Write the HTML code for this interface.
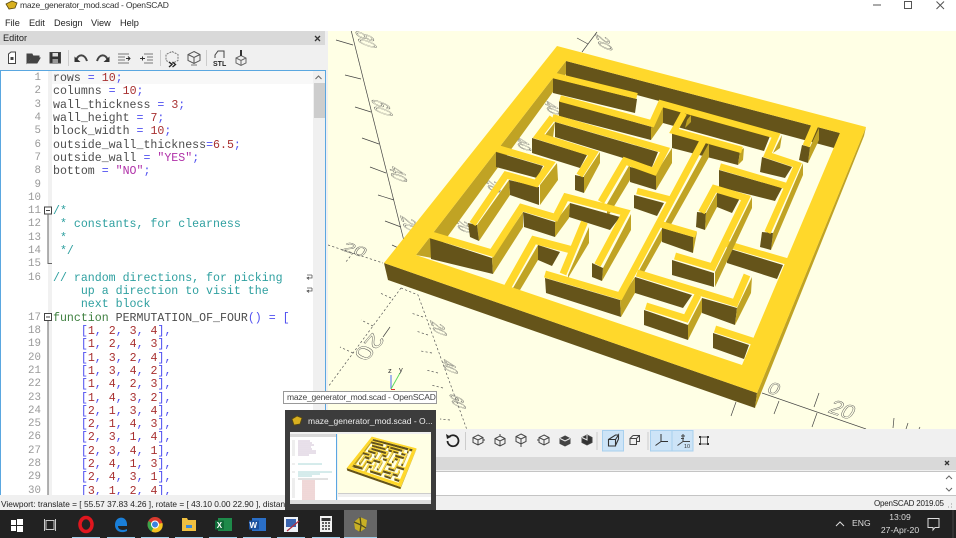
<!DOCTYPE html>
<html lang="en"><head><meta charset="utf-8"><title>maze_generator_mod.scad - OpenSCAD</title>
<style>
html,body{margin:0;padding:0;width:956px;height:538px;overflow:hidden;background:#f0f0f0}
body{position:relative;font-family:"Liberation Sans",sans-serif;color:#222}
.a{position:absolute}
.ui{font-size:9.2px;white-space:nowrap;filter:blur(.25px)}
pre{margin:0;font-family:"Liberation Mono",monospace;font-size:11.6px;line-height:13.32px;filter:blur(.35px)}
.k{color:#5050f0}.n{color:#a83030}.s{color:#b030a8}.c{color:#2fa0a0}.f{color:#3f8040}.i{color:#4c4c4c}
.d{fill:#65541a}.l{fill:#c0a324}
.t{fill:none;stroke:#ffd82b;stroke-width:7;stroke-linejoin:miter;stroke-miterlimit:6}
.ax{stroke:#444;stroke-width:.7;fill:none}
.da{stroke:#555;stroke-width:.7;fill:none;stroke-dasharray:2.2 2.2}
.lb{font-family:"Liberation Sans",sans-serif;font-size:10px;fill:none;stroke:#555;stroke-width:.45px;vector-effect:non-scaling-stroke}
</style></head><body>

<!-- title + menu -->
<div class="a" style="left:0;top:0;width:956px;height:31px;background:#fff"></div>
<div class="a ui" style="left:20px;top:0;font-size:8.5px;letter-spacing:-.2px;line-height:11px;color:#333">maze_generator_mod.scad - OpenSCAD</div>
<div class="a ui" style="left:5px;top:18px;line-height:11px;color:#222">File</div>
<div class="a ui" style="left:29px;top:18px;line-height:11px;color:#222">Edit</div>
<div class="a ui" style="left:54px;top:18px;line-height:11px;color:#222">Design</div>
<div class="a ui" style="left:91px;top:18px;line-height:11px;color:#222">View</div>
<div class="a ui" style="left:120px;top:18px;line-height:11px;color:#222">Help</div>

<!-- editor -->
<div class="a" style="left:0;top:31px;width:325px;height:14px;background:#d9d9d9"></div>
<div class="a ui" style="left:3px;top:33px;line-height:11px;color:#222">Editor</div>
<div class="a" style="left:0;top:70px;width:326px;height:425px;box-sizing:border-box;border:1px solid #5aa7e0;border-bottom:0;background:#fff"></div>
<div class="a" style="left:48px;top:71px;width:4px;height:424px;background:#f1f1f1"></div>
<div class="a" style="left:52px;top:71px;width:261px;height:13px;background:#f8f8f8"></div>
<div class="a" style="left:313px;top:71px;width:12px;height:424px;background:#f0f0f0"></div>
<div class="a" style="left:314px;top:83px;width:11px;height:35px;background:#cdcdcd"></div>

<pre class="a" style="left:0;top:72px;width:41px;height:423px;overflow:hidden;text-align:right;color:#999;font-size:10.8px">1
2
3
4
5
6
7
8
9
10
11
12
13
14
15
16


17
18
19
20
21
22
23
24
25
26
27
28
29
30</pre>
<pre class="a i" style="left:53px;top:72px;height:423px;overflow:hidden">rows <span class="k">=</span> <span class="n">10</span><span class="k">;</span>
columns <span class="k">=</span> <span class="n">10</span><span class="k">;</span>
wall_thickness <span class="k">=</span> <span class="n">3</span><span class="k">;</span>
wall_height <span class="k">=</span> <span class="n">7</span><span class="k">;</span>
block_width <span class="k">=</span> <span class="n">10</span><span class="k">;</span>
outside_wall_thickness<span class="k">=</span><span class="n">6.5</span><span class="k">;</span>
outside_wall <span class="k">=</span> <span class="s">"YES"</span><span class="k">;</span>
bottom <span class="k">=</span> <span class="s">"NO"</span><span class="k">;</span>


<span class="c">/*
 * constants, for clearness
 *
 */</span>

<span class="c">// random directions, for picking
    up a direction to visit the
    next block</span>
<span class="f">function</span> PERMUTATION_OF_FOUR<span class="k">()</span> <span class="k">=</span> <span class="k">[</span>
    <span class="k">[</span><span class="n">1</span><span class="k">,</span> <span class="n">2</span><span class="k">,</span> <span class="n">3</span><span class="k">,</span> <span class="n">4</span><span class="k">],</span>
    <span class="k">[</span><span class="n">1</span><span class="k">,</span> <span class="n">2</span><span class="k">,</span> <span class="n">4</span><span class="k">,</span> <span class="n">3</span><span class="k">],</span>
    <span class="k">[</span><span class="n">1</span><span class="k">,</span> <span class="n">3</span><span class="k">,</span> <span class="n">2</span><span class="k">,</span> <span class="n">4</span><span class="k">],</span>
    <span class="k">[</span><span class="n">1</span><span class="k">,</span> <span class="n">3</span><span class="k">,</span> <span class="n">4</span><span class="k">,</span> <span class="n">2</span><span class="k">],</span>
    <span class="k">[</span><span class="n">1</span><span class="k">,</span> <span class="n">4</span><span class="k">,</span> <span class="n">2</span><span class="k">,</span> <span class="n">3</span><span class="k">],</span>
    <span class="k">[</span><span class="n">1</span><span class="k">,</span> <span class="n">4</span><span class="k">,</span> <span class="n">3</span><span class="k">,</span> <span class="n">2</span><span class="k">],</span>
    <span class="k">[</span><span class="n">2</span><span class="k">,</span> <span class="n">1</span><span class="k">,</span> <span class="n">3</span><span class="k">,</span> <span class="n">4</span><span class="k">],</span>
    <span class="k">[</span><span class="n">2</span><span class="k">,</span> <span class="n">1</span><span class="k">,</span> <span class="n">4</span><span class="k">,</span> <span class="n">3</span><span class="k">],</span>
    <span class="k">[</span><span class="n">2</span><span class="k">,</span> <span class="n">3</span><span class="k">,</span> <span class="n">1</span><span class="k">,</span> <span class="n">4</span><span class="k">],</span>
    <span class="k">[</span><span class="n">2</span><span class="k">,</span> <span class="n">3</span><span class="k">,</span> <span class="n">4</span><span class="k">,</span> <span class="n">1</span><span class="k">],</span>
    <span class="k">[</span><span class="n">2</span><span class="k">,</span> <span class="n">4</span><span class="k">,</span> <span class="n">1</span><span class="k">,</span> <span class="n">3</span><span class="k">],</span>
    <span class="k">[</span><span class="n">2</span><span class="k">,</span> <span class="n">4</span><span class="k">,</span> <span class="n">3</span><span class="k">,</span> <span class="n">1</span><span class="k">],</span>
    <span class="k">[</span><span class="n">3</span><span class="k">,</span> <span class="n">1</span><span class="k">,</span> <span class="n">2</span><span class="k">,</span> <span class="n">4</span><span class="k">],</span></pre>

<!-- viewport -->
<div class="a" style="left:328px;top:31px;width:628px;height:398px;background:#ffffe5"></div>
<svg class="a" style="left:328px;top:31px" width="628" height="398" viewBox="328 31 628 398">
<defs>
<g id="maze">
<polygon class="d" points="566,61 840,133 834,148 566,76"/>
<polygon class="l" points="566,61 416,255 432,258 566,74"/>
<polygon class="l" points="819,128 810,147 808,163 819,140"/>
<polygon class="d" points="802,145 810,147 808,163 799,160"/>
<polyline class="t" points="815,125 806,146"/>

<polygon class="d" points="553,78 637,99 635,113 553,93"/>
<polyline class="t" style="stroke-width:6" points="552,75 637,96"/>

<polygon class="d" points="559,101 652,127 651,140 559,116"/>
<polygon class="d" points="663,107 770,136 764,151 663,123"/>
<polygon class="l" points="663,107 651,128 651,140 663,123"/>
<polygon class="l" points="782,135 780,148 773,153"/>
<polygon class="d" points="762,157 792,167 785,178 760,172"/>
<polygon class="l" points="803,163 773,233 771,250 803,175"/>
<polygon class="d" points="762,232 773,233 771,250 760,247"/>
<polyline class="t" style="stroke-width:6.5" points="560,98.5 652,123.5 661,103.5 776,135.5 767.5,155 797.5,165 767.5,232.5"/>

<polygon class="l" points="691,115 691,122 685,128 687,120"/>
<polygon class="d" points="672,133 740,151 738,165 672,148"/>
<polygon class="l" points="744,148 743,160 738,165 740,151"/>
<polyline class="t" style="stroke-width:6.5" points="684,113 674,131 742,150"/>

<polygon class="d" points="555,122 658,152 652,167 555,137"/>
<polygon class="l" points="555,122 545,135 553,138"/>
<polygon class="l" points="672,148 656,173 656,190 672,163"/>
<polygon class="d" points="630,167 656,173 656,190 630,182"/>
<polygon class="l" points="630,164 607,204 607,218 630,180"/>
<polyline class="t" points="552.5,117.5 665,150 654,171.5 625,161 601,202"/>
<polygon class="d" points="532,138 587,155 580,168 532,153"/>
<polygon class="l" points="600,152 600,163 584,193 584,176"/>
<polygon class="d" points="575,175 584,177 584,193 575,190"/>
<polyline class="t" points="552.5,117.5 538.5,136 593.5,153.5 579.5,175.5"/>

<polygon class="d" points="496,152 543,166 537,178 496,167"/>
<polygon class="l" points="557,163 540,185 540,205 558,180"/>
<polygon class="d" points="509,180 539,187 539,205 510,195"/>
<polygon class="l" points="509,180 477,225 479,241 510,195"/>
<polygon class="d" points="468,223 477,225 479,241 470,237"/>
<polyline class="t" points="496,148 550,164 536,183.5 506,175 472.5,224"/>

<polygon class="d" points="719,170 782,188 775,201 719,187"/>
<polyline class="t" style="stroke-width:6.5" points="720,166.5 786,186"/>

<polygon class="d" points="634,195 664,203 657,216 634,208"/>
<polyline class="t" style="stroke-width:6.5" points="637,191 672,200"/>

<polygon class="d" points="430,238 492,258 493,274 431,259"/>
<polygon class="l" points="492,258 523,212 523,227 493,274"/>
<polygon class="d" points="523,212 555,222 555,237 524,227"/>
<polygon class="l" points="555,222 570,203 569,218 555,237"/>
<polygon class="d" points="570,203 620,217 610,230 569,217"/>
<polygon class="l" points="631,214 603,268 602,281 631,230"/>
<polygon class="d" points="592,263 603,268 602,281 592,277"/>
<polyline class="t" points="428,234 492,253 521.5,207.5 555.5,217.5 566,197 625.5,212.5 597.5,265"/>

<polygon class="l" points="709,143 709,157 642,276 636,276"/>
<polygon class="d" points="545,278 620,300 621,317 546,293"/>
<polygon class="l" points="635,277 620,300 621,317 635,293"/>
<polyline class="t" points="703,141 634,270 620,296 545,274"/>

<polygon class="l" points="589,227 589,243 568,278 568,275"/>
<polyline class="t" points="584.5,222 563,274"/>

<polygon class="d" points="717,193 740,198 732,213 717,207"/>
<polygon class="d" points="697,212 706,213 705,230 696,227"/>
<polygon class="l" points="706,213 717,193 717,207 705,230"/>
<polygon class="d" points="727,248 783,265 777,279 727,263"/>
<polyline class="t" style="stroke-width:6.5" points="727,244 789,262"/>
<polygon class="l" points="752,197 752,208 715,287 715,272"/>
<polygon class="d" points="672,260 714,273 714,287 672,275"/>
<polyline class="t" points="701.5,212.5 714.5,188.5 746,198 712.5,267 675,256"/>

<polygon class="d" points="662,228 693,237 693,253 662,242"/>
<polygon class="l" points="697,232 693,253 693,237"/>
<polyline class="t" style="stroke-width:6.5" points="660,224 696,234.5"/>

<polygon class="d" points="635,277 692,295 683,308 635,293"/>
<polygon class="d" points="702,298 737,308 735,325 702,313"/>
<polygon class="l" points="752,277 737,308 735,325 751,293"/>
<polyline class="t" points="637,273 735,303 747,275"/>

<polygon class="d" points="644,310 688,325 688,340 644,325"/>
<polygon class="l" points="702,298 688,325 688,340 702,312"/>
<polyline class="t" points="646,306 686,318.5 698,295"/>

<polygon class="d" points="713,333 749,345 744,359 713,348"/>
<polyline class="t" points="715,329 755,342"/>

<polygon class="d" points="538,245 560,252 552,266 538,260"/>
<polygon class="l" points="538,245 513,288 520,290 538,260"/>
<polyline class="t" style="stroke-width:7.5" points="507,288 534,240 572,250"/>

<polygon class="d" points="384,263 757,393 755,408 388,280"/>
<polygon class="l" points="866,127 864,136 755,408 757,393"/>
<path fill="#ffd82b" fill-rule="evenodd" d="M557,46 866,127 757,393 384,263Z M566,61 416,255 742,365 840,133Z"/>
</g>
</defs>

<!-- axes -->
<g class="ax">
<path d="M351,30 408,257"/>
<path d="M353,45 336,40M361,79 345,75M371,112 355,107M379,144 362,138M386,173 370,167M394,200 378,195M401,227 385,221M407,252 392,245"/>
<path d="M582,52 597,32M577,38 588,44"/>
<path d="M762,393 866,429"/>
<path d="M736,402 731,416M779,401 774,414M819,393 814,407M817,413 812,427M894,418 893,428M908,423 906,429M920,427 919,429"/>
<path d="M390,327 383,337"/>
</g>
<g class="da">
<path d="M328,245 383,263"/>
<path d="M353,253 345,263"/>
<path d="M401,288 328,387"/>
<path d="M401,288 418,295 467,430"/>
<path d="M391,298 380,293M373,326 361,320M353,353 340,347"/>
<path d="M423,317 411,313M428,335 416,331M432,353 421,351M438,373 426,370M443,388 431,385M450,420 440,419"/>
</g>
<text class="lb" transform="matrix(.45,1.26,-2.5,-.83,355,30)">80</text>
<text class="lb" transform="matrix(.45,1.26,-2.5,-.83,371,98)">60</text>
<text class="lb" transform="matrix(.3,1.2,-2.2,-.75,389,165)">40</text>
<text class="lb" transform="matrix(.45,1.26,-2.2,-.75,400,215)">20</text>
<text class="lb" transform="matrix(.45,1.26,-1.9,-.7,595,33)">20</text>
<text class="lb" transform="matrix(.4,1.1,-1.8,-.6,544,100)">40</text>
<text class="lb" transform="matrix(.4,1.1,-1.8,-.6,515,136)">40</text>
<text class="lb" transform="matrix(.4,1.1,-1.8,-.6,485,178)">20</text>
<text class="lb" transform="matrix(.4,1.1,-1.8,-.6,455,218)">20</text>
<text class="lb" transform="matrix(2,.65,-.8,1.2,341,250)">20</text>
<text class="lb" transform="matrix(1.9,.65,-.85,1.5,766,392)">0</text>
<text class="lb" transform="matrix(2.1,.7,-1.1,1.8,827,412)">20</text>
<text class="lb" transform="matrix(-1.8,2.1,-1.9,-1,373,332)">20</text>
<text class="lb" transform="matrix(.4,1.1,-1.9,-.7,430,320)">20</text>
<text class="lb" transform="matrix(.4,1.1,-1.9,-.7,441,358)">40</text>
<text class="lb" transform="matrix(.4,1.1,-1.9,-.7,449,393)">60</text>

<use href="#maze"/>

<!-- axes gizmo -->
<path d="M391,375V389" stroke="#4a6cf0" stroke-width="1"/>
<path d="M391,389 400,373" stroke="#5fd85f" stroke-width="1"/>
<path d="M391,389.5h4" stroke="#e03030" stroke-width="1"/>
<text x="388" y="373" font-size="7.5" font-family="Liberation Sans" fill="#333">z</text>
<text x="399" y="372" font-size="7.5" font-family="Liberation Sans" fill="#333">y</text>
</svg>

<!-- viewport toolbar, console, status -->
<div class="a" style="left:328px;top:429px;width:628px;height:28px;background:#f0f0f0"></div>
<div class="a" style="left:328px;top:457px;width:628px;height:13px;background:#d9d9d9"></div>
<div class="a" style="left:328px;top:471px;width:628px;height:25px;box-sizing:border-box;background:#fff;border:1px solid #c4c4c4;border-width:1px 0"></div>
<div class="a" style="left:0;top:496px;width:956px;height:14px;background:#f0f0f0"></div>
<div class="a ui" style="left:1px;top:498px;font-size:8.33px;line-height:12px;color:#222">Viewport: translate = [ 55.57 37.83 4.26 ], rotate = [ 43.10 0.00 22.90 ], distance = 140.00</div>
<div class="a ui" style="left:874px;top:498px;font-size:8px;letter-spacing:-.2px;line-height:12px;color:#222">OpenSCAD 2019.05</div>

<!-- taskbar -->
<div class="a" style="left:0;top:510px;width:956px;height:28px;background:#222"></div>
<div class="a" style="left:344px;top:510px;width:33px;height:28px;background:#666"></div>
<div class="a" style="left:72px;top:536.5px;width:28px;height:1.5px;background:#9fd0ea"></div>
<div class="a" style="left:107px;top:536.5px;width:28px;height:1.5px;background:#9fd0ea"></div>
<div class="a" style="left:141px;top:536.5px;width:28px;height:1.5px;background:#9fd0ea"></div>
<div class="a" style="left:175px;top:536.5px;width:28px;height:1.5px;background:#9fd0ea"></div>
<div class="a" style="left:209px;top:536.5px;width:28px;height:1.5px;background:#9fd0ea"></div>
<div class="a" style="left:243px;top:536.5px;width:28px;height:1.5px;background:#9fd0ea"></div>
<div class="a" style="left:277px;top:536.5px;width:28px;height:1.5px;background:#9fd0ea"></div>
<div class="a" style="left:312px;top:536.5px;width:28px;height:1.5px;background:#9fd0ea"></div>
<div class="a" style="left:344px;top:536.5px;width:33px;height:1.5px;background:#9fd0ea"></div>
<div class="a ui" style="left:852px;top:518px;font-size:8.6px;line-height:11px;color:#ddd">ENG</div>
<div class="a ui" style="left:876px;top:511px;width:48px;text-align:center;font-size:8.6px;line-height:13px;color:#ddd">13:09<br>27-Apr-20</div>

<!-- tooltip -->
<div class="a ui" style="left:283px;top:391px;width:154px;height:13px;box-sizing:border-box;background:#fff;border:1px solid #999;font-size:8.5px;letter-spacing:-.2px;line-height:11px;padding-left:3px;color:#444">maze_generator_mod.scad - OpenSCAD</div>

<!-- taskbar preview -->
<div class="a" style="left:285px;top:410px;width:151px;height:100px;background:#3c3c3c"></div>
<div class="a ui" style="left:308px;top:415px;font-size:8.5px;line-height:12px;color:#eee">maze_generator_mod.scad - O...</div>
<svg class="a" style="left:290px;top:432px" width="141" height="72" viewBox="0 0 141 72">
<rect width="141" height="72" fill="#f0f0f0"/>
<rect x="0" y="2" width="47" height="66" fill="#fff"/>
<rect x="0" y="2" width="47" height="3" fill="#d9d9d9"/>
<rect x="48" y="2" width="93" height="59" fill="#ffffe5"/>
<g fill="none" stroke-width=".5">
<path d="M8,9h12M8,11h14M8,13h16M8,15h13M8,17h14M8,19h18M8,21h18M8,23h11" stroke="#a080a8"/>
<path d="M8,32h24M8,40h34M8,42h22M8,44h14" stroke="#58b0b0"/>
<path d="M8,47h30" stroke="#888"/>
<path d="M12,49h13M12,51h13M12,53h13M12,55h13M12,57h13M12,59h13M12,61h13M12,63h13M12,65h13M12,67h13" stroke="#c06060"/>
<path d="M2,9h3M2,11h3M2,13h3M2,15h3M2,17h3M2,19h3M2,21h3M2,23h3M2,32h3M2,40h3M2,47h3M2,49h3M2,51h3M2,53h3M2,55h3M2,57h3M2,59h3M2,61h3M2,63h3M2,65h3" stroke="#bbb"/>
</g>
<rect x="46" y="2" width="1" height="66" fill="#5aa7e0"/>
<g transform="translate(1,-2) scale(.145)"><use href="#maze"/></g>
<rect x="48" y="61" width="93" height="1" fill="#ccc"/>
<rect x="48" y="65" width="93" height="3" fill="#fff"/>
<rect x="0" y="68" width="141" height="4" fill="#ddd"/>
</svg>

<!-- icons overlay -->
<svg class="a" style="left:0;top:0;filter:blur(.25px)" width="956" height="538" viewBox="0 0 956 538" fill="none">
<!-- app icon -->
<path d="M6,4 12,1 17,3 15,8 9,9Z" fill="#d8b020" stroke="#5a4a10" stroke-width=".8"/>
<!-- window controls -->
<path d="M873,5h8" stroke="#555" stroke-width="1"/>
<rect x="904.5" y="1.5" width="7" height="7" stroke="#555"/>
<path d="M936.500,1.500 944,9M944,1.500 936.500,9" stroke="#555"/>
<!-- panel close -->
<path d="M315,36 320,41M320,36 315,41" stroke="#333" stroke-width="1.300"/>
<path d="M945,461 949,465M949,461 945,465" stroke="#333" stroke-width="1.300"/>
<!-- scroll arrows -->
<path d="M315.500,79 318.500,76 321.500,79" stroke="#666"/>
<path d="M946,479 949,476 952,479M946,488 949,491 952,488" stroke="#666"/>
<!-- resize grip -->
<path d="M951,507h1M948,507h1M951,504h1" stroke="#999"/>
<!-- editor toolbar -->
<g stroke="#444" stroke-width="1">
<path d="M8.500,63.500V54L11,52h4.500v11.500Z" fill="#fff"/><rect x="10.500" y="57" width="3" height="3" fill="#444" stroke="none"/>
<path d="M27,54h5l1,2h6v2H31l-4,5Z" fill="#444"/><path d="M29,62l3,-4h8l-3,5H28Z" fill="#444"/>
<path d="M50,52.500h10.500v10.500H50Z" fill="#333"/><rect x="52.500" y="53" width="5.500" height="3.500" fill="#ddd" stroke="none"/><rect x="52.500" y="59" width="5.500" height="4" fill="#999" stroke="none"/>
<path d="M76,61 C78,53 85,54 87,61" stroke-width="2"/><path d="M74.500,56.500v5.500h6Z" fill="#333" stroke="none"/>
<path d="M108,61 C106,53 99,54 97,61" stroke-width="2"/><path d="M109.500,56.500v5.500h-6Z" fill="#333" stroke="none"/>
<path d="M118,54h11M118,57h7M118,60h7M118,63h11" stroke="#777"/><path d="M126,58.500h4M128,56.500l2,2 -2,2" stroke="#333"/>
<path d="M144,54h9M147,57h6M147,60h6M144,63h9" stroke="#777"/><path d="M140,58.500h5M142.500,56.500v4" stroke="#333"/>
<path d="M172,51.500l6,3v6l-6,3 -6,-3v-6Z" stroke="#777" stroke-dasharray="2 1"/><path d="M169,62l3,2.500 -3,2.500M172.500,62l3,2.500 -3,2.500" stroke="#222" stroke-width="1.300"/>
<path d="M194,51.500l6,3v6l-6,3 -6,-3v-6ZM188,54.500l6,3 6,-3M194,57.500v6" stroke="#555"/><path d="M191,65h6" stroke="#777"/>
<path d="M215,58v-3l3,-4h6v7" stroke="#444"/>
<path d="M236,58l5,-2.500 5,2.500v5l-5,2.500 -5,-2.500ZM241,60.500v5M236,58l5,2.500 5,-2.500" stroke="#666"/><path d="M241,50v6" stroke="#333" stroke-width="2"/>
<path d="M68.500,50v16M160.500,50v16M206.500,50v16" stroke="#ccc"/>
</g>
<text x="213" y="66" font-size="7" font-weight="bold" font-family="Liberation Sans" fill="#222">STL</text>
<!-- gutter folds -->
<g stroke="#444">
<rect x="44.500" y="207" width="7" height="7" fill="#fff"/><path d="M46,210.500h4"/>
<path d="M48,214V263.500H52" stroke="#666"/>
<rect x="44.500" y="313.500" width="7" height="7" fill="#fff"/><path d="M46,317h4"/>
<path d="M48,321V495" stroke="#666"/>
</g>
<path d="M312,275h-5M312,275v3h-5M309,277l-2,1 2,1.500M312,288h-5M312,288v3h-5M309,290l-2,1 2,1.500" stroke="#555" stroke-width=".8"/>
<!-- viewport toolbar -->
<rect x="602.500" y="430.500" width="21" height="20.500" fill="#cde4f7" stroke="#a8d0ee"/>
<rect x="650.500" y="430.500" width="21.500" height="20.500" fill="#cde4f7" stroke="#a8d0ee"/>
<rect x="672" y="430.500" width="21" height="20.500" fill="#cde4f7" stroke="#a8d0ee"/>
<g stroke="#444">
<path d="M447.500,441a5.500,5.500 0 1 0 2,-4.500" stroke="#222" stroke-width="1.800"/><path d="M446,434l1,5 4,-2Z" fill="#222" stroke="none"/>
<path d="M648,432v18M465.500,432v18M597,432v18" stroke="#ccc"/>
<path d="M478,435l5,2.500v5l-5,2.500 -5,-2.500v-5ZM473,437.500l5,2.500 5,-2.500M478,440v5M483,440h2" stroke="#444"/>
<path d="M500,436l5,2.500v5l-5,2.500 -5,-2.500v-5ZM495,438.500l5,2.500 5,-2.500M500,441v5M500,436v-2"/>
<path d="M521,434l5,2.500v5l-5,2.500 -5,-2.500v-5ZM516,436.500l5,2.500 5,-2.500M521,439v5M521,444v3"/>
<path d="M544,435l5,2.500v5l-5,2.500 -5,-2.500v-5ZM539,437.500l5,2.500 5,-2.500M544,440v5M539,440h-2"/>
<path d="M565,436l5,2.500v5l-5,2.500 -5,-2.500v-5Z" fill="#444"/><path d="M560,438.500l5,2.500 5,-2.500" stroke="#eee"/>
<path d="M587,435l5,2.500v5l-5,2.500 -5,-2.500v-5Z" fill="#333"/><path d="M587,435v5l-5,-2.500" stroke="#eee"/>
<path d="M608.500,439.500h7v6.500h-7ZM608.500,439.500l7,-4.500h3M615.500,439.500l3,-4.500v4l-3,6.500" stroke="#333" stroke-width="1.100"/>
<path d="M630,438.500h6.500v6H630ZM633,435.500h6.500v6h-3M630,438.500l3,-3M636.500,438.500l3,-3" stroke="#444"/>
<path d="M661,434v7.500M661,441.500l-5.500,4M661,441.500h7" stroke="#333"/>
<path d="M683,434v7.500M683,441.500l-5.500,4M683,441.500h7M681,436h4M681,438.500h3" stroke="#444"/>
<path d="M700.500,437h7v7h-7Z" stroke="#555"/><path d="M699,436h2v2h-2ZM707,436h2v2h-2ZM699,443h2v2h-2ZM707,443h2v2h-2Z" fill="#333" stroke="none"/>
</g>
<text x="684" y="448" font-size="5.500" font-family="Liberation Sans" fill="#333">10</text>
<!-- preview icon -->
<path d="M292,419 297,416 302,418 300,424 294,425Z" fill="#d8b020" stroke="#5a4a10" stroke-width=".8"/>
<!-- taskbar icons -->
<g fill="#fff"><rect x="11" y="520" width="5" height="5"/><rect x="17" y="519" width="6" height="6"/><rect x="11" y="526" width="5" height="5"/><rect x="17" y="526" width="6" height="6"/></g>
<path d="M46,520.500h8v9h-8ZM44.500,519v12M55.500,519v12" stroke="#ccc"/>
<ellipse cx="86" cy="524.500" rx="6" ry="7" stroke="#e0161e" stroke-width="3.500"/>
<path d="M115,525c0,-10 13,-10 12,1h-9c0,4 5,5 9,3v2c-6,3 -12,0 -12,-6Z" fill="#1a7fd8"/>
<circle cx="155" cy="524.500" r="7.500" fill="#d93a2e"/>
<path d="M155,524.500 148.500,521A7.500,7.500 0 0 0 152,531.500Z" fill="#3aa54a"/>
<path d="M155,524.500 162.500,523A7.500,7.500 0 0 1 151.500,531.500Z" fill="#f4c21f"/>
<circle cx="155" cy="524.500" r="3.500" fill="#3b82e0" stroke="#fff"/>
<path d="M182,518h5l1,2h8v11h-14Z" fill="#f0c040"/><rect x="186" y="525" width="6" height="3" fill="#3b8ad8"/>
<rect x="218" y="518" width="14" height="13" fill="#1e8a4a"/><rect x="215" y="520.500" width="9" height="9" fill="#106b38"/>
<text x="216.800" y="528" font-size="8" font-weight="bold" font-family="Liberation Sans" fill="#fff">X</text>
<rect x="252" y="518" width="14" height="13" fill="#2a6fc8"/><rect x="249" y="520.500" width="10" height="9" fill="#1a4f9c"/>
<text x="249.500" y="528" font-size="8" font-weight="bold" font-family="Liberation Sans" fill="#fff">W</text>
<rect x="284" y="517" width="14" height="15" fill="#eef2f8"/><rect x="286" y="519" width="10" height="8" fill="#3a64b0"/><path d="M287,531 299,521" stroke="#b03040" stroke-width="1.300"/>
<rect x="320" y="516" width="12" height="16" fill="#f2f2f2"/><rect x="321.500" y="518" width="9" height="3" fill="#333"/>
<path d="M322,523h2M325,523h2M328,523h2M322,526h2M325,526h2M328,526h2M322,529h2M325,529h2M328,529h2" stroke="#333" stroke-width="1.500"/>
<path d="M354,522l6,-5 7,3 -1,8 -6,4 -5,-3Z" fill="#c8b024"/><path d="M360,517l1,8 5,3M354,522l7,3 -1,7" stroke="#4d4a20" stroke-width="1.300"/>
<path d="M836,526l4,-4 4,4" stroke="#ddd"/>
<path d="M928,518.500h11v9h-4l-2,2.500v-2.500h-5Z" stroke="#ddd"/>
<path d="M953,510v28" stroke="#444"/>
</svg>
</body></html>
